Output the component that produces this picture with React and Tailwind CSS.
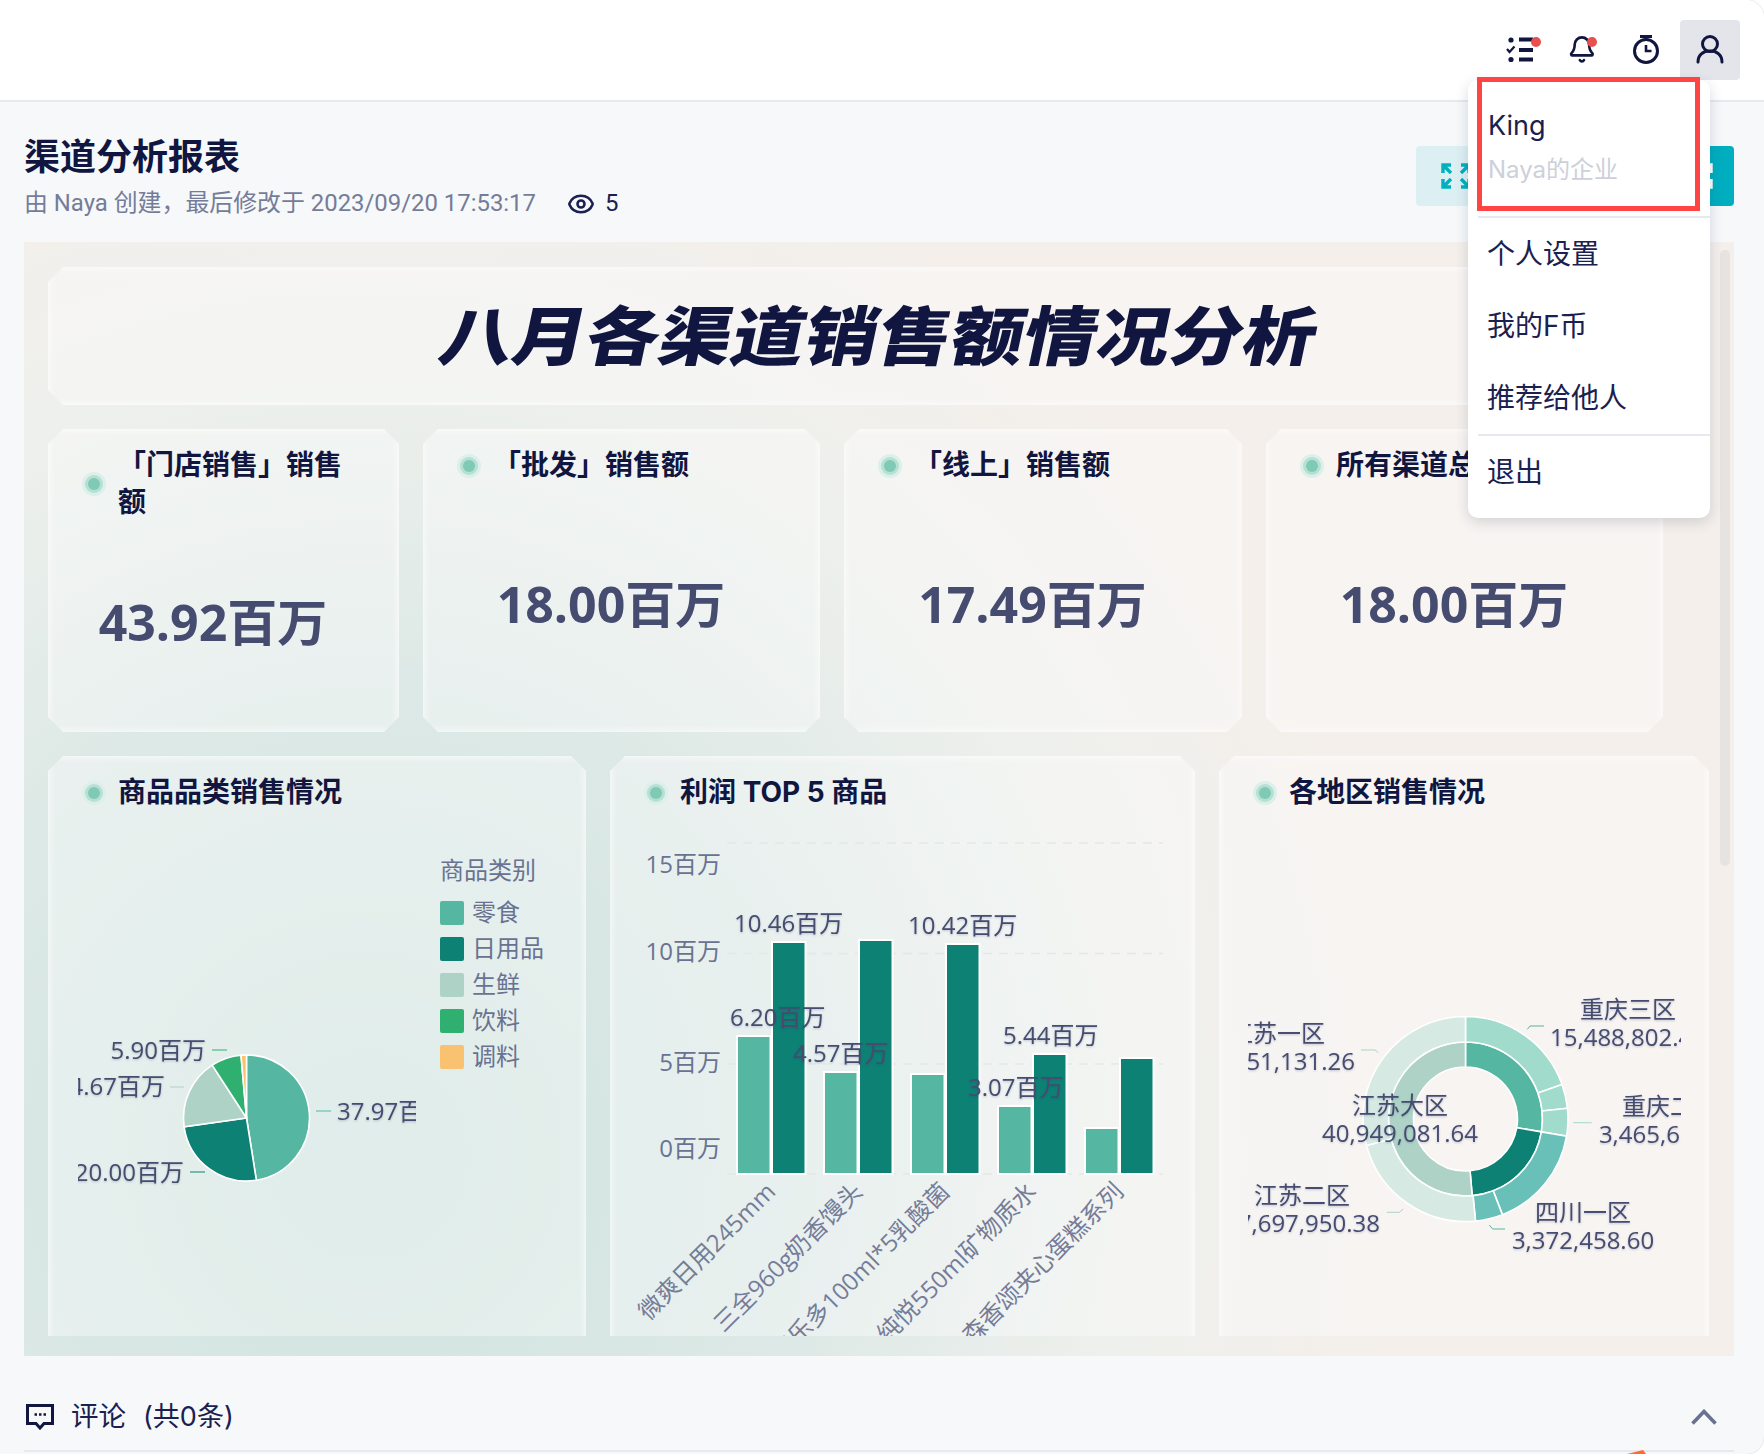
import { Eye } from "lucide-react";

const cutCorners =
  "[clip-path:polygon(15px_0,calc(100%-15px)_0,100%_15px,100%_calc(100%-15px),calc(100%-15px)_100%,15px_100%,0_calc(100%-15px),0_15px)]";
const glassCard =
  "bg-white/35 shadow-[inset_0_0_8px_rgba(255,255,255,1)]";

const kpiCards = [
  { title: "「门店销售」销售额", value: "43.92百万", width: "w-[351px]" },
  { title: "「批发」销售额", value: "18.00百万", width: "w-[397px]" },
  { title: "「线上」销售额", value: "17.49百万", width: "w-[398px]" },
  { title: "所有渠道总销售额", value: "18.00百万", width: "w-[397px]" },
];

const legendItems = [
  { name: "零食", color: "bg-[#55b7a1]" },
  { name: "日用品", color: "bg-[#0d8174]" },
  { name: "生鲜", color: "bg-[#aed3c6]" },
  { name: "饮料", color: "bg-[#30b070]" },
  { name: "调料", color: "bg-[#f9c270]" },
];

const pieSlices = [
  { from: 0, to: 171, fill: "#55b7a1" },
  { from: 171, to: 262, fill: "#0d8174" },
  { from: 262, to: 327, fill: "#aed3c6" },
  { from: 327, to: 355, fill: "#30b070" },
  { from: 355, to: 360, fill: "#f9c270" },
];

const barGroups = [
  { x: 738, light: 1036, dark: 942, label: "微爽日用245mm" },
  { x: 825, light: 1072, dark: 940, label: "三全960g奶香馒头" },
  { x: 912, light: 1074, dark: 944, label: "养乐多100ml*5乳酸菌" },
  { x: 999, light: 1106, dark: 1054, label: "纯悦550ml矿物质水" },
  { x: 1086, light: 1128, dark: 1058, label: "森香颂夹心蛋糕系列" },
];

const barLabels = [
  { x: 735, y: 922, text: "10.46百万" },
  { x: 909, y: 924, text: "10.42百万" },
  { x: 731, y: 1016, text: "6.20百万" },
  { x: 794, y: 1052, text: "4.57百万" },
  { x: 969, y: 1086, text: "3.07百万" },
  { x: 1004, y: 1034, text: "5.44百万" },
];

const donutSlices = [
  { r0: 52, r1: 77, from: 0, to: 99.6, fill: "#55b7a1" },
  { r0: 52, r1: 77, from: 99.6, to: 175, fill: "#0d8174" },
  { r0: 52, r1: 77, from: 175, to: 360, fill: "#aed3c6" },
  { r0: 77, r1: 102.5, from: 0, to: 70.3, fill: "#a0dbcb" },
  { r0: 77, r1: 102.5, from: 70.3, to: 84, fill: "#a0dbcb" },
  { r0: 77, r1: 102.5, from: 84, to: 99.6, fill: "#a0dbcb" },
  { r0: 77, r1: 102.5, from: 99.6, to: 158.9, fill: "#68c0b8" },
  { r0: 77, r1: 102.5, from: 158.9, to: 174.4, fill: "#68c0b8" },
  { r0: 77, r1: 102.5, from: 174.4, to: 255, fill: "#d6eae3" },
  { r0: 77, r1: 102.5, from: 255, to: 360, fill: "#d6eae3" },
];

const donutLabels = [
  { x: 1628, y: 1008, name: "重庆三区", value: "15,488,802.46" },
  { x: 1277, y: 1032, name: "江苏一区", value: "23,251,131.26" },
  { x: 1670, y: 1105, name: "重庆二区", value: "3,465,612.34" },
  { x: 1302, y: 1194, name: "江苏二区", value: "17,697,950.38" },
  { x: 1583, y: 1211, name: "四川一区", value: "3,372,458.60" },
  { x: 1400, y: 1104, name: "江苏大区", value: "40,949,081.64" },
];

const donutLines = [
  { d: "M1527.3 1029.3L1530 1026H1544", stroke: "#55b7a1" },
  { d: "M1361 1050H1375L1378.3 1052.7", stroke: "#aed3c6" },
  { d: "M1573.3 1122.7H1591.7", stroke: "#a0dbcb" },
  { d: "M1489.3 1225L1492.7 1229H1505", stroke: "#55b7a1" },
  { d: "M1386.7 1212.3H1399.3L1403.3 1209", stroke: "#aed3c6" },
];

function polar(cx, cy, r, deg) {
  const a = ((deg - 90) * Math.PI) / 180;
  return [cx + r * Math.cos(a), cy + r * Math.sin(a)];
}

function ringPath(cx, cy, r0, r1, from, to) {
  const end = to - from >= 360 ? to - 0.01 : to;
  const large = end - from > 180 ? 1 : 0;
  const [ax, ay] = polar(cx, cy, r1, from);
  const [bx, by] = polar(cx, cy, r1, end);
  const [dx, dy] = polar(cx, cy, r0, end);
  const [ex, ey] = polar(cx, cy, r0, from);
  if (r0 === 0) {
    return `M${cx} ${cy}L${ax} ${ay}A${r1} ${r1} 0 ${large} 1 ${bx} ${by}Z`;
  }
  return `M${ax} ${ay}A${r1} ${r1} 0 ${large} 1 ${bx} ${by}L${dx} ${dy}A${r0} ${r0} 0 ${large} 0 ${ex} ${ey}Z`;
}

function ExpandIcon({ className }) {
  return (
    <svg viewBox="0 0 30 26" className={className} fill="none" stroke="currentColor" strokeWidth="3.4">
      <path d="M2 10V2h8M2 2l8 8" />
      <path d="M28 10V2h-8M28 2l-8 8" />
      <path d="M2 16v8h8M2 24l8-8" />
      <path d="M28 16v8h-8M28 24l-8-8" />
    </svg>
  );
}

function TopBar() {
  return (
    <div className="flex h-[102px] justify-end border-b-2 border-[#e8e9ee] bg-white pr-[24px] pt-[20px]">
      <svg viewBox="0 0 64 60" className="h-[60px] w-[64px]" fill="none" stroke="#10163f">
        <path d="M31 19.5h14M31 30h14M31 39.5h14" strokeWidth="3.8" />
        <path d="M19 29l2.5 3 5-5.5" strokeWidth="2.2" />
        <circle cx="23" cy="20" r="2.6" fill="#10163f" stroke="none" />
        <circle cx="23" cy="39.5" r="2.6" fill="#10163f" stroke="none" />
        <circle cx="48" cy="22" r="5" fill="#e8504f" stroke="none" />
      </svg>
      <svg viewBox="0 0 64 60" className="h-[60px] w-[64px]" fill="none" stroke="#10163f" strokeLinecap="round" strokeLinejoin="round">
        <g transform="translate(15.5 15) scale(1.2)" strokeWidth="2.2">
          <path d="M10.268 21a2 2 0 0 0 3.464 0" />
          <path d="M3.262 15.326A1 1 0 0 0 4 17h16a1 1 0 0 0 .74-1.673C19.41 13.956 18 12.499 18 8A6 6 0 0 0 6 8c0 4.499-1.411 5.956-2.738 7.326" />
        </g>
        <circle cx="40" cy="22" r="5" fill="#e8504f" stroke="none" />
      </svg>
      <svg viewBox="0 0 64 60" className="h-[60px] w-[64px]" fill="none" stroke="#10163f" strokeWidth="3">
        <circle cx="30" cy="31" r="11.5" />
        <path d="M24 16.5h12M30 16.5v4" />
        <path d="M30 25v6h5.5" strokeWidth="2.6" />
      </svg>
      <div className="flex h-[60px] w-[60px] items-center justify-center rounded-[4px] bg-[#e4e5ea]">
        <svg viewBox="0 0 60 60" className="h-[60px] w-[60px]" fill="none" stroke="#10163f" strokeWidth="3" strokeLinecap="round">
          <circle cx="30" cy="24" r="7.5" />
          <path d="M18 42c0-7 5-11 12-11s12 4 12 11" />
        </svg>
      </div>
    </div>
  );
}

function UserMenu() {
  return (
    <div className="absolute left-[1468px] top-[80px] z-20 w-[242px] rounded-[10px] bg-white pb-[10px] text-[28px] text-[#1a2050] shadow-[0_4px_14px_rgba(20,30,60,0.16)]">
      <div className="absolute left-[9px] top-[-3px] h-[134px] w-[223px] border-[5px] border-[#ff4444]" />
      <div className="pb-[28px] pl-[20px] pt-[28px]">
        <div className="text-[27px] leading-[36px]">King</div>
        <div className="mt-[8px] text-[24px] leading-[36px] text-[#cdd0da]">Naya的企业</div>
      </div>
      <div className="ml-[10px] h-[2px] bg-[#e8e9ee]" />
      {["个人设置", "我的F币", "推荐给他人"].map((item) => (
        <div key={item} className="flex h-[72px] items-center pl-[19px]">
          {item}
        </div>
      ))}
      <div className="ml-[10px] h-[2px] bg-[#e8e9ee]" />
      <div className="flex h-[72px] items-center pl-[19px]">退出</div>
    </div>
  );
}

function ReportHeader() {
  return (
    <div className="flex h-[88px] items-center justify-between">
      <div>
        <h1 className="pt-[1px] text-[36px] font-bold leading-[48px] text-[#10163f]">渠道分析报表</h1>
        <div className="mt-[7px] flex h-[32px] items-center font-['Roboto','Noto_Sans_CJK_SC',sans-serif] text-[23.9px] text-[#757c99]">
          <span>由 Naya 创建，最后修改于 2023/09/20 17:53:17</span>
          <Eye className="ml-[31px] h-[28px] w-[28px] text-[#1a2050]" strokeWidth={2.2} />
          <span className="ml-[10px] text-[#1a2050]">5</span>
        </div>
      </div>
      <div className="flex h-[60px] w-[318px] gap-[12px] font-['Noto_Sans_CJK_SC',sans-serif]">
        <div className="flex flex-1 items-center rounded-[4px] bg-[#dcf0f4] pl-[25px] text-[#00b0c0]">
          <ExpandIcon className="h-[26px] w-[30px]" />
        </div>
        <div className="flex flex-1 items-center justify-end rounded-[4px] bg-[#00aec0] pr-[21px] text-white">
          <ExpandIcon className="h-[26px] w-[30px]" />
        </div>
      </div>
    </div>
  );
}

function CardTitle({ children }) {
  return (
    <div className="flex items-center gap-[12px] pl-[34px] pr-[34px] pt-[18px] text-[28px] font-bold leading-[37px] text-[#10163f]">
      <span className="flex h-[24px] w-[24px] shrink-0 items-center justify-center rounded-full bg-[#dcefe9]">
        <span className="flex h-[18px] w-[18px] items-center justify-center rounded-full bg-[#b5e0d3]">
          <span className="h-[12px] w-[12px] rounded-full bg-[#7fc9b5]" />
        </span>
      </span>
      <span>{children}</span>
    </div>
  );
}

function KpiCard({ title, value, width }) {
  return (
    <div className={`flex h-[303px] shrink-0 flex-col ${width} ${cutCorners} ${glassCard}`}>
      <CardTitle>{title}</CardTitle>
      <div className="flex flex-1 items-center justify-center pb-[8px] pr-[21px] font-['Open_Sans','Noto_Sans_CJK_SC',sans-serif] text-[50px] font-bold text-[#454c70]">
        {value}
      </div>
    </div>
  );
}

function CategoryChart() {
  const labels = [
    { x: 206, y: 1049, text: "5.90百万", line: "M212 1050H227", stroke: "#30b070", anchor: "end" },
    { x: 165, y: 1085, text: "14.67百万", line: "M170 1087H184", stroke: "#aed3c6", anchor: "end" },
    { x: 184, y: 1171, text: "20.00百万", line: "M190 1172H205", stroke: "#0d8174", anchor: "end" },
    { x: 337, y: 1110, text: "37.97百万", line: "M316 1111H331", stroke: "#55b7a1", anchor: "start" },
  ];
  return (
    <div className="flex">
      <svg viewBox="78 811 338 525" className="ml-[30px] h-[525px] w-[338px] font-['Open_Sans','Noto_Sans_CJK_SC',sans-serif] text-[24px]">
        {pieSlices.map((slice) => (
          <path key={slice.from} d={ringPath(246.5, 1118, 0, 63, slice.from, slice.to)} fill={slice.fill} stroke="#fff" strokeWidth="1.6" />
        ))}
        {labels.map((label) => (
          <g key={label.text}>
            <path d={label.line} stroke={label.stroke} fill="none" />
            <text x={label.x} y={label.y} textAnchor={label.anchor} dominantBaseline="central" className="fill-[#454c70] drop-shadow-[0_1px_1px_rgba(40,50,90,0.25)]">
              {label.text}
            </text>
          </g>
        ))}
      </svg>
      <div className="ml-[24px] mt-[44px] text-[24px] leading-[32px] text-[#697391]">
        <div className="mb-[8px]">商品类别</div>
        {legendItems.map((item) => (
          <div key={item.name} className="flex h-[36px] items-center gap-[8px]">
            <span className={`h-[24px] w-[24px] rounded-[2px] ${item.color}`} />
            <span>{item.name}</span>
          </div>
        ))}
      </div>
    </div>
  );
}

function ProfitChart() {
  const gridLines = [843, 953.5, 1064, 1174];
  const axisLabels = [
    { y: 863, text: "15百万" },
    { y: 950, text: "10百万" },
    { y: 1061, text: "5百万" },
    { y: 1147, text: "0百万" },
  ];
  return (
    <svg viewBox="611 811 583 525" className="h-[525px] w-[583px] font-['Open_Sans','Noto_Sans_CJK_SC',sans-serif] text-[24px]">
      {gridLines.map((y) => (
        <line key={y} x1="728" x2="1164" y1={y} y2={y} stroke="#e4e7e6" strokeWidth="1.5" strokeDasharray="9 7" />
      ))}
      {axisLabels.map((label) => (
        <text key={label.text} x="722" y={label.y} textAnchor="end" dominantBaseline="central" className="fill-[#697391]">
          {label.text}
        </text>
      ))}
      {barGroups.map((group) => (
        <g key={group.x} stroke="#fff" strokeWidth="2">
          <rect x={group.x} y={group.light} width="33.5" height={1174 - group.light} fill="#55b7a1" />
          <rect x={group.x + 35} y={group.dark} width="33.5" height={1174 - group.dark} fill="#0d8174" />
        </g>
      ))}
      {barGroups.map((group) => (
        <text
          key={group.label}
          x={group.x + 40}
          y="1193"
          textAnchor="end"
          transform={`rotate(-45 ${group.x + 40} 1193)`}
          className="fill-[#757c99]"
        >
          {group.label}
        </text>
      ))}
      {barLabels.map((label) => (
        <text key={label.text} x={label.x} y={label.y} dominantBaseline="central" className="fill-[#454c70] drop-shadow-[0_1px_1px_rgba(40,50,90,0.25)]">
          {label.text}
        </text>
      ))}
    </svg>
  );
}

function RegionChart() {
  return (
    <svg viewBox="1248 811 433 525" className="ml-[29px] h-[525px] w-[433px] font-['Open_Sans','Noto_Sans_CJK_SC',sans-serif] text-[24px]">
      {donutSlices.map((slice) => (
        <path
          key={`${slice.r0}-${slice.from}`}
          d={ringPath(1465.5, 1119, slice.r0, slice.r1, slice.from, slice.to)}
          fill={slice.fill}
          stroke="#fff"
          strokeWidth="1.6"
        />
      ))}
      {donutLines.map((line) => (
        <path key={line.d} d={line.d} stroke={line.stroke} fill="none" />
      ))}
      {donutLabels.map((label) => (
        <text key={label.name} textAnchor="middle" className="fill-[#454c70] drop-shadow-[0_1px_1px_rgba(40,50,90,0.25)]">
          <tspan x={label.x} y={label.y} dominantBaseline="central">{label.name}</tspan>
          <tspan x={label.x} y={label.y + 28} dominantBaseline="central">{label.value}</tspan>
        </text>
      ))}
    </svg>
  );
}

function Dashboard() {
  return (
    <div className="relative h-[1114px] bg-[radial-gradient(ellipse_60%_95%_at_20%_82%,#cfe3df_0%,#dde9e6_45%,#eef0ed_75%,#f4efeb_100%)] pb-[20px]">
      <div className="absolute right-[4px] top-[8px] h-[616px] w-[10px] rounded-full bg-[#e6e3e0]" />
      <div className="h-[1094px] overflow-hidden pl-[24px] pt-[25px]">
        <div className={`flex h-[138px] w-[1662px] items-center justify-center ${cutCorners} ${glassCard}`}>
          <div className="text-[73px] font-black leading-none text-[#10163f] [transform:skewX(-12deg)_scaleY(0.88)]">
            八月各渠道销售额情况分析
          </div>
        </div>
        <div className="mt-[24px] flex gap-[24px]">
          {kpiCards.map((card) => (
            <KpiCard key={card.value + card.title} {...card} />
          ))}
        </div>
        <div className="mt-[24px] flex h-[700px] gap-[24px]">
          <div className={`h-full w-[538px] ${cutCorners} ${glassCard}`}>
            <CardTitle>商品品类销售情况</CardTitle>
            <CategoryChart />
          </div>
          <div className={`h-full w-[585px] ${cutCorners} ${glassCard}`}>
            <CardTitle>利润 TOP 5 商品</CardTitle>
            <ProfitChart />
          </div>
          <div className={`h-full w-[490px] ${cutCorners} ${glassCard}`}>
            <CardTitle>各地区销售情况</CardTitle>
            <RegionChart />
          </div>
        </div>
      </div>
    </div>
  );
}

function CommentBar() {
  return (
    <div className="mt-[28px] flex h-[68px] items-center justify-between border-b-2 border-[#e8e9ee] text-[#1a2050]">
      <div className="flex items-center">
        <svg viewBox="0 0 28 26" className="ml-[2px] h-[26px] w-[28px]" fill="none" stroke="#10163f" strokeWidth="3">
          <path d="M1.5 1.5h25v18h-8.5L14 24l-4-4.5H1.5z" />
          <path d="M8.5 10.5h2.5M13 10.5h2.5M17.5 10.5H20" strokeWidth="2.4" />
        </svg>
        <span className="ml-[17px] text-[27.5px]">评论</span>
        <span className="ml-[17px] text-[27px]">(共0条)</span>
      </div>
      <svg viewBox="0 0 26 16" className="mr-[17px] h-[16px] w-[26px]" fill="none" stroke="#69718f" strokeWidth="3.6">
        <path d="M1.5 14.5L13 2.5l11.5 12" />
      </svg>
    </div>
  );
}

export default function App() {
  return (
    <div className="relative h-[1454px] overflow-hidden bg-white font-['Inter','Noto_Sans_CJK_SC',sans-serif]">
      <div className="h-full overflow-hidden rounded-r-[18px] bg-[#f6f8fa] shadow-[0_0_2px_#c8c9ce]">
        <TopBar />
        <div className="pl-[24px] pr-[30px] pt-[30px]">
          <ReportHeader />
          <div className="mt-[22px]">
            <Dashboard />
          </div>
          <CommentBar />
        </div>
      </div>
      <UserMenu />
      <div className="absolute bottom-0 left-[1627px] h-[4px] w-[19px] bg-[#ff6b35] [clip-path:polygon(0_100%,85%_0,100%_100%)]" />
    </div>
  );
}
